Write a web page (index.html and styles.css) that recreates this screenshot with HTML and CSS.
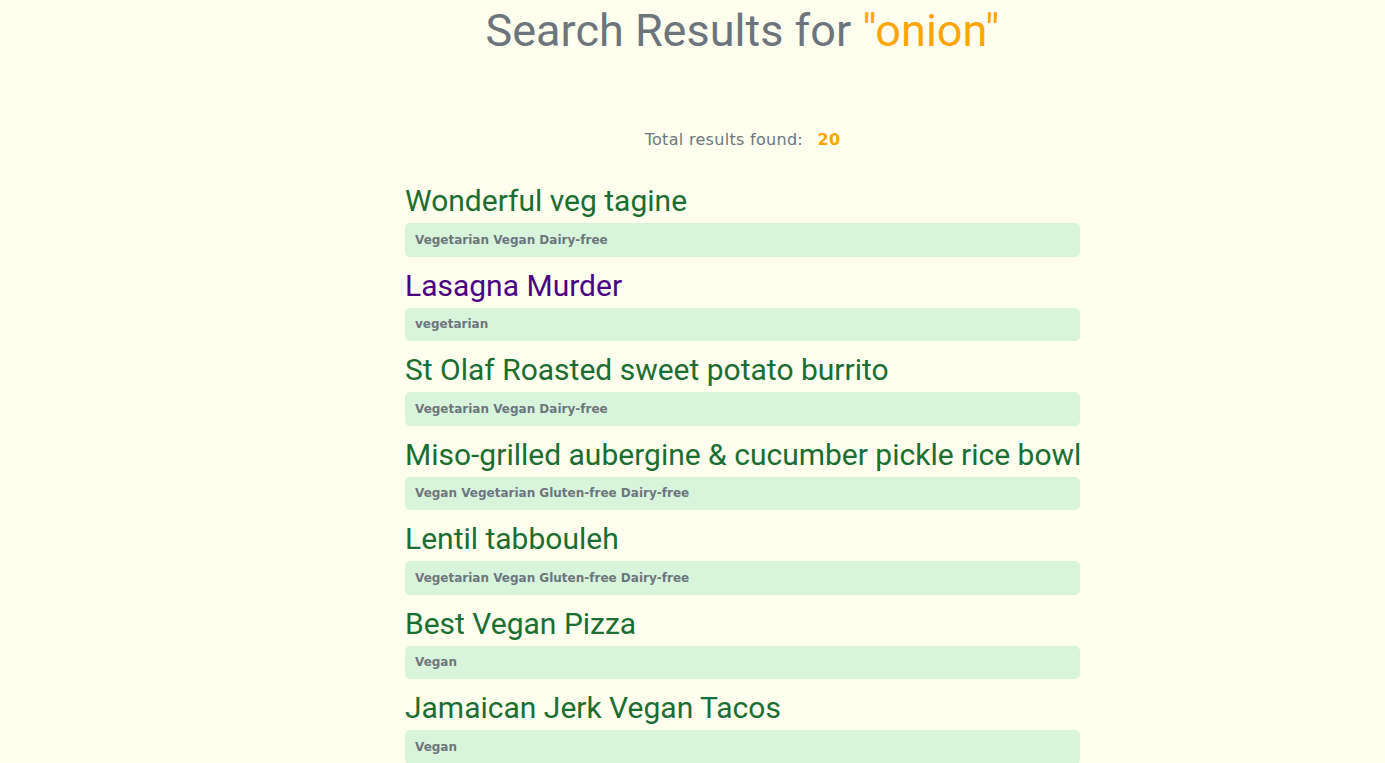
FILE: index.html
```html
<!DOCTYPE html>
<html lang="en">
<head>
<meta charset="utf-8">
<title>Search Results</title>
<link rel="stylesheet" href="styles.css">
</head>
<body>
<div class="page">
  <main class="content">
    <h1 class="heading">Search Results for <span class="query">"onion"</span></h1>
    <p class="total">Total results found: <span class="count">20</span></p>
    <ul class="results">
      <li class="result"><a class="title" href="#r1">Wonderful veg tagine</a><div class="tags">Vegetarian Vegan Dairy-free</div></li>
      <li class="result"><a class="title visited" href="#r2">Lasagna Murder</a><div class="tags">vegetarian</div></li>
      <li class="result"><a class="title" href="#r3">St Olaf Roasted sweet potato burrito</a><div class="tags">Vegetarian Vegan Dairy-free</div></li>
      <li class="result"><a class="title" href="#r4">Miso-grilled aubergine &amp; cucumber pickle rice bowl</a><div class="tags">Vegan Vegetarian Gluten-free Dairy-free</div></li>
      <li class="result"><a class="title" href="#r5">Lentil tabbouleh</a><div class="tags">Vegetarian Vegan Gluten-free Dairy-free</div></li>
      <li class="result"><a class="title" href="#r6">Best Vegan Pizza</a><div class="tags">Vegan</div></li>
      <li class="result"><a class="title" href="#r7">Jamaican Jerk Vegan Tacos</a><div class="tags">Vegan</div></li>
    </ul>
  </main>
</div>
</body>
</html>
```
FILE: styles.css
```css
html, body {
  margin: 0;
  padding: 0;
  background: #fffff0;
}
body {
  font-family: Roboto, "Liberation Sans", sans-serif;
  overflow: hidden;
}
.page {
  padding-left: 100px;
  display: flex;
  justify-content: center;
}
.content {
  width: 675px;
  display: flex;
  flex-direction: column;
  align-items: center;
}
.heading {
  margin: 0;
  padding-top: 4px;
  font-size: 45px;
  font-weight: 400;
  line-height: 54px;
  color: #6c757d;
  white-space: nowrap;
}
.query {
  color: #ffa500;
}
.total {
  margin: 71px 0 0;
  font-family: "DejaVu Sans", sans-serif;
  font-size: 16px;
  letter-spacing: 0.3px;
  line-height: 22px;
  color: #6c757d;
}
.count {
  margin-left: 9px;
  color: #ffa500;
  font-weight: 700;
}
.results {
  list-style: none;
  margin: 30px 0 0;
  padding: 0;
  width: 100%;
  display: flex;
  flex-direction: column;
  gap: 9px;
}
.result {
  display: flex;
  flex-direction: column;
  gap: 4px;
}
.title {
  padding-top: 2px;
  font-size: 30px;
  line-height: 36px;
  color: #1a6e31;
  text-decoration: none;
  white-space: nowrap;
}
.title.visited {
  color: #4b0082;
}
.tags {
  height: 33.5px;
  box-sizing: border-box;
  padding: 0 10px;
  display: flex;
  align-items: center;
  background: #d8f5dc;
  border-radius: 5px;
  font-family: "DejaVu Sans", sans-serif;
  font-weight: 700;
  font-size: 12px;
  color: #6c757d;
}
```
